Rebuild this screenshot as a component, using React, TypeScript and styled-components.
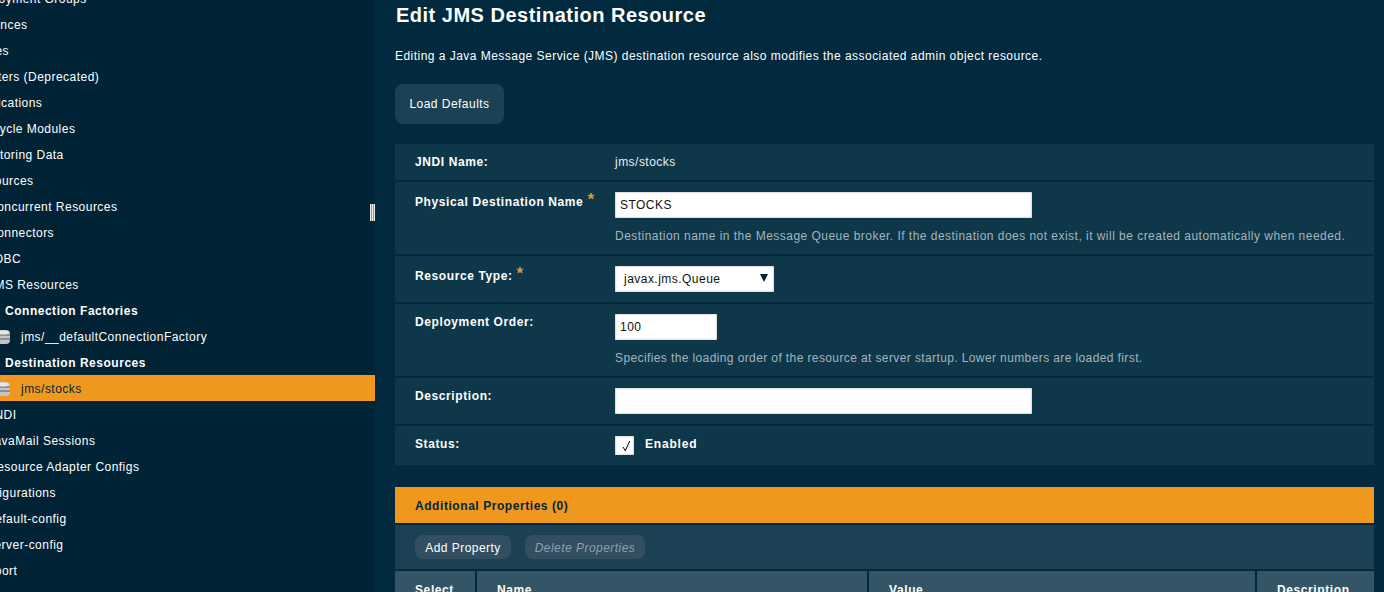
import React from 'react'
import styled, { createGlobalStyle } from 'styled-components'

const GlobalStyle = createGlobalStyle`
    html, body {
        margin: 0;
        height: 592px;
        overflow: hidden;
        background: #012a3e;
    }
    * {
        box-sizing: border-box;
    }
`

const Page = styled.div`
    display: flex;
    width: 1384px;
    height: 592px;
    overflow: hidden;
    font-family: "Liberation Sans", Arial, sans-serif;
    font-size: 12px;
    letter-spacing: 0.47px;
    color: #fff;
`

const Sidebar = styled.nav`
    position: relative;
    flex: 0 0 375px;
    height: 592px;
    overflow: hidden;
    background: #002436;
`

const Tree = styled.ul`
    list-style: none;
    margin: -15px 0 0 0;
    padding: 0;
`

const TreeRow = styled.li<{ $selected?: boolean; $bold?: boolean }>`
    display: flex;
    align-items: center;
    height: 26px;
    padding-top: 2px;
    white-space: nowrap;
    font-weight: ${props => props.$bold ? 700 : 400};
    letter-spacing: ${props => props.$bold ? '0.52px' : '0.47px'};
    background: ${props => props.$selected ? '#f0981e' : 'transparent'};
    color: ${props => props.$selected ? '#00263a' : '#fff'};
`

// the tree is scrolled sideways in the panel, so the first levels start left of it
const TreeRowInner = styled.span<{ $shift: number }>`
    display: flex;
    align-items: center;
    gap: 11px;
    margin-left: ${props => props.$shift}px;
`

const Splitter = styled.div`
    position: absolute;
    right: 0;
    top: 204px;
    width: 5px;
    height: 17px;
    background: repeating-linear-gradient(90deg, #e8e8e8 0 1px, #999 1px 2px);
`

const Main = styled.main`
    flex: 1;
    padding: 0 10px 0 20px;
    min-width: 0;
`

const Title = styled.h1`
    margin: 4px 0 0 1px;
    font-size: 20px;
    line-height: 23px;
    font-weight: 700;
    letter-spacing: 0.5px;
`

const Intro = styled.p`
    margin: 22px 0 0;
    line-height: 14px;
`

const LoadButton = styled.button`
    display: block;
    width: 109px;
    height: 40px;
    margin: 21px 0 20px;
    padding: 0;
    border: 0;
    border-radius: 8px;
    background: #1d4154;
    color: #fff;
    font: inherit;
    letter-spacing: inherit;
`

const Form = styled.div`
    display: flex;
    flex-direction: column;
    gap: 2px;
`

const FormRow = styled.div<{ $height: number }>`
    display: flex;
    height: ${props => props.$height}px;
    padding-left: 20px;
    background: #0f374a;
`

const Label = styled.div<{ $top: number }>`
    flex: 0 0 200px;
    padding-top: ${props => props.$top}px;
    line-height: 14px;
    font-weight: 700;
    letter-spacing: 0.6px;
`

const Star = styled.span`
    position: relative;
    top: -1px;
    margin-left: 4px;
    color: #e0962e;
    font-size: 17px;
    line-height: 10px;
`

const Field = styled.div<{ $top: number }>`
    padding-top: ${props => props.$top}px;
`

const StaticValue = styled.div`
    line-height: 14px;
    color: #e8edf0;
`

const TextInput = styled.input<{ $width: number }>`
    display: block;
    width: ${props => props.$width}px;
    height: 26px;
    padding: 0 5px;
    border: 0;
    background: #fff;
    box-shadow: inset 0 0 2px #8a8a8a;
    color: #111;
    font: inherit;
    letter-spacing: inherit;
    outline: 0;
`

const SelectBox = styled.div`
    position: relative;
    width: 159px;
    height: 26px;
    padding-left: 9px;
    background: #fff;
    box-shadow: inset 0 0 2px #8a8a8a;
    color: #111;
    line-height: 26px;
`

const SelectArrow = styled.svg`
    position: absolute;
    top: 7px;
    right: 5px;
`

const Help = styled.div<{ $spacing: number }>`
    margin-top: 11px;
    line-height: 14px;
    letter-spacing: ${props => props.$spacing}px;
    color: #a4b4bd;
`

const CheckRow = styled.label`
    display: flex;
    align-items: flex-start;
    gap: 11px;
    line-height: 17px;
    font-weight: 700;
    letter-spacing: 0.8px;
`

const CheckBox = styled.span`
    display: flex;
    width: 19px;
    height: 19px;
    background: #fff;
    box-shadow: inset 0 0 2px #8a8a8a;
`

const SectionBar = styled.div`
    display: flex;
    align-items: center;
    height: 36px;
    margin-top: 22px;
    padding: 2px 0 0 20px;
    background: #f0981e;
    color: #00263a;
    font-weight: 700;
    letter-spacing: 0.56px;
`

const Toolbar = styled.div`
    display: flex;
    align-items: center;
    gap: 14px;
    height: 44px;
    margin-top: 2px;
    padding-left: 20px;
    background: #1c4155;
`

const SmallButton = styled.button<{ $width: number; $disabled?: boolean }>`
    width: ${props => props.$width}px;
    height: 24px;
    padding: 2px 0 0;
    border: 0;
    border-radius: 8px;
    background: #324f62;
    color: ${props => props.$disabled ? '#8e9fa9' : '#fff'};
    font: inherit;
    font-style: ${props => props.$disabled ? 'italic' : 'normal'};
    letter-spacing: inherit;
`

const TableHead = styled.div`
    display: grid;
    grid-template-columns: 80px 390px 386px 1fr;
    column-gap: 2px;
    margin-top: 2px;
`

const HeadCell = styled.div`
    height: 36px;
    padding: 12px 0 0 20px;
    background: #345565;
    line-height: 14px;
    font-weight: 700;
    letter-spacing: 0.6px;
`

function DbIcon() {
    return (
        <svg width="14" height="14" viewBox="0 0 14 14">
            <rect x="0" y="0" width="14" height="14" rx="4" fill="#c4c4c4" />
            <rect x="0" y="4" width="14" height="2" fill="#8f8f8f" />
            <rect x="0" y="8" width="14" height="2" fill="#8f8f8f" />
            <ellipse cx="7" cy="2.5" rx="6" ry="2" fill="#e6e6e6" />
        </svg>
    )
}

const tree = [
    { text: 'Deployment Groups', shift: -28 },
    { text: 'Instances', shift: -28 },
    { text: 'Nodes', shift: -28 },
    { text: 'Clusters (Deprecated)', shift: -28 },
    { text: 'Applications', shift: -28 },
    { text: 'Lifecycle Modules', shift: -28 },
    { text: 'Monitoring Data', shift: -28 },
    { text: 'Resources', shift: -28 },
    { text: 'Concurrent Resources', shift: -12 },
    { text: 'Connectors', shift: -12 },
    { text: 'JDBC', shift: -12 },
    { text: 'JMS Resources', shift: -12 },
    { text: 'Connection Factories', shift: 5, bold: true },
    { text: 'jms/__defaultConnectionFactory', shift: -4, icon: true },
    { text: 'Destination Resources', shift: 5, bold: true },
    { text: 'jms/stocks', shift: -4, icon: true, selected: true },
    { text: 'JNDI', shift: -12 },
    { text: 'JavaMail Sessions', shift: -12 },
    { text: 'Resource Adapter Configs', shift: -12 },
    { text: 'Configurations', shift: -28 },
    { text: 'default-config', shift: -12 },
    { text: 'server-config', shift: -12 },
    { text: 'Support', shift: -28 },
]

function App() {
    return (
        <>
            <GlobalStyle />
            <Page>
                <Sidebar>
                    <Tree>
                        {tree.map(item => (
                            <TreeRow key={item.text} $selected={item.selected} $bold={item.bold}>
                                <TreeRowInner $shift={item.shift}>
                                    {item.icon && <DbIcon />}
                                    {item.text}
                                </TreeRowInner>
                            </TreeRow>
                        ))}
                    </Tree>
                    <Splitter />
                </Sidebar>
                <Main>
                    <Title>Edit JMS Destination Resource</Title>
                    <Intro>Editing a Java Message Service (JMS) destination resource also modifies the associated admin object resource.</Intro>
                    <LoadButton>Load Defaults</LoadButton>
                    <Form>
                        <FormRow $height={36}>
                            <Label $top={11}>JNDI Name:</Label>
                            <Field $top={11}><StaticValue>jms/stocks</StaticValue></Field>
                        </FormRow>
                        <FormRow $height={72}>
                            <Label $top={13}>Physical Destination Name<Star>*</Star></Label>
                            <Field $top={10}>
                                <TextInput $width={417} defaultValue="STOCKS" />
                                <Help $spacing={0.47}>Destination name in the Message Queue broker. If the destination does not exist, it will be created automatically when needed.</Help>
                            </Field>
                        </FormRow>
                        <FormRow $height={46}>
                            <Label $top={13}>Resource Type:<Star>*</Star></Label>
                            <Field $top={10}>
                                <SelectBox>
                                    javax.jms.Queue
                                    <SelectArrow width="10" height="10" viewBox="0 0 10 10">
                                        <path d="M1 1h8L5 9z" fill="#00263a" />
                                    </SelectArrow>
                                </SelectBox>
                            </Field>
                        </FormRow>
                        <FormRow $height={72}>
                            <Label $top={11}>Deployment Order:</Label>
                            <Field $top={10}>
                                <TextInput $width={102} defaultValue="100" />
                                <Help $spacing={0.39}>Specifies the loading order of the resource at server startup. Lower numbers are loaded first.</Help>
                            </Field>
                        </FormRow>
                        <FormRow $height={46}>
                            <Label $top={11}>Description:</Label>
                            <Field $top={10}><TextInput $width={417} /></Field>
                        </FormRow>
                        <FormRow $height={39}>
                            <Label $top={11}>Status:</Label>
                            <Field $top={10}>
                                <CheckRow>
                                    <CheckBox>
                                        <svg width="19" height="19" viewBox="0 0 19 19">
                                            <path d="M8 11l2.3 3.7L14.7 5" fill="none" stroke="#000" strokeWidth="1" />
                                        </svg>
                                    </CheckBox>
                                    Enabled
                                </CheckRow>
                            </Field>
                        </FormRow>
                    </Form>
                    <SectionBar>Additional Properties (0)</SectionBar>
                    <Toolbar>
                        <SmallButton $width={96}>Add Property</SmallButton>
                        <SmallButton $width={120} $disabled>Delete Properties</SmallButton>
                    </Toolbar>
                    <TableHead>
                        <HeadCell>Select</HeadCell>
                        <HeadCell>Name</HeadCell>
                        <HeadCell>Value</HeadCell>
                        <HeadCell>Description</HeadCell>
                    </TableHead>
                </Main>
            </Page>
        </>
    )
}

export default App
